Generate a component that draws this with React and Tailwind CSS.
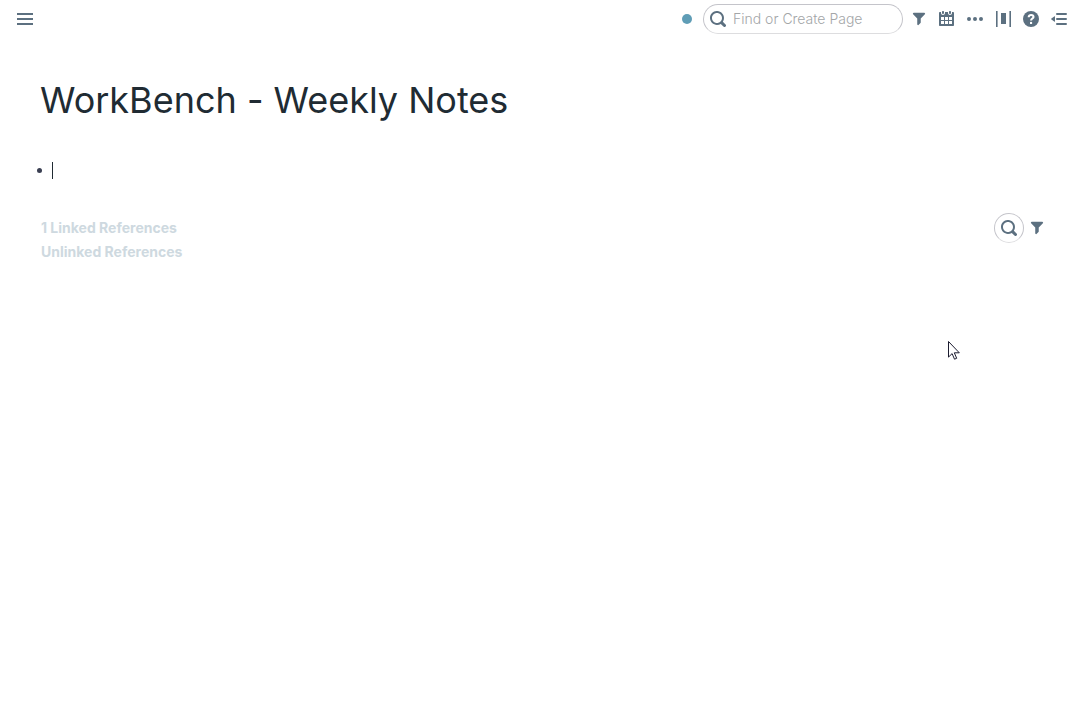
const ICONS = {
  search:
    'M15.55 13.43l-2.67-2.68a6.94 6.94 0 001.11-3.76c0-3.87-3.13-7-7-7s-7 3.13-7 7 3.13 7 7 7c1.39 0 2.68-.42 3.76-1.11l2.68 2.67a1.498 1.498 0 102.12-2.12zm-8.56-1.44c-2.76 0-5-2.24-5-5s2.24-5 5-5 5 2.24 5 5-2.24 5-5 5z',
  filter:
    'M13.99.99h-12a1.003 1.003 0 00-.71 1.71l4.71 4.71V14a1.003 1.003 0 001.71.71l2-2c.18-.18.29-.43.29-.71V7.41L14.7 2.7a1.003 1.003 0 00-.71-1.71z',
  calendar:
    'M11 3c.6 0 1-.5 1-1V1c0-.6-.4-1-1-1s-1 .4-1 1v1c0 .5.4 1 1 1zm3-2h-1v1c0 1.1-.9 2-2 2s-2-.9-2-2V1H6v1c0 1.1-.9 2-2 2s-2-.9-2-2V1H1c-.6 0-1 .5-1 1v12c0 .6.4 1 1 1h13c.6 0 1-.4 1-1V2c0-.6-.5-1-1-1zM5 13H2v-3h3v3zm0-4H2V6h3v3zm4 4H6v-3h3v3zm0-4H6V6h3v3zm4 4h-3v-3h3v3zm0-4h-3V6h3v3zM4 3c.6 0 1-.5 1-1V1c0-.6-.4-1-1-1S3 .4 3 1v1c0 .5.4 1 1 1z',
  more: 'M2 6.03a2 2 0 100 4 2 2 0 100-4zM14 6.03a2 2 0 100 4 2 2 0 100-4zM8 6.03a2 2 0 100 4 2 2 0 100-4z',
  columns: 'M1 0h1.6v16H1zM6 2h5v11H6zM14.4 0H16v16h-1.6z',
  menu: 'M0 2h16v2H0zM0 7h16v2H0zM0 12h16v2H0z',
  menuClosed:
    'M6 2h9a1 1 0 010 2H6a1 1 0 010-2zM6 7h9a1 1 0 010 2H6a1 1 0 010-2zM6 12h9a1 1 0 010 2H6a1 1 0 010-2zM4 5.8v4.4a.5.5 0 01-.8.4L.4 8.4a.5.5 0 010-.8l2.8-2.2a.5.5 0 01.8.4z',
};

function Icon({ name, className = 'size-4' }) {
  return (
    <svg viewBox="0 0 16 16" className={className} fill="currentColor" fillRule="evenodd" aria-hidden="true">
      <path d={ICONS[name]} />
    </svg>
  );
}

function HelpIcon() {
  return (
    <svg viewBox="0 0 16 16" className="size-4" aria-hidden="true">
      <circle cx="8" cy="8" r="8" fill="currentColor" />
      <path d="M5.7 6.2C5.7 4.7 6.8 4 8.1 4s2.4.7 2.4 1.9c0 1.6-2.4 1.7-2.4 3.6" fill="none" stroke="white" strokeWidth="2.1" />
      <path d="M7 10.9h2.1V13H7z" fill="white" />
    </svg>
  );
}

function IconButton({ label, children }) {
  return (
    <button type="button" aria-label={label} className="flex size-4 items-center justify-center">
      {children}
    </button>
  );
}

export default function App() {
  return (
    <div className="min-h-screen bg-white font-['Inter',sans-serif] text-[#202b33] [font-feature-settings:'calt'_0]">
      <header className="flex items-center justify-between py-1 pr-[13px] pl-[17px] text-[#5c7080]">
        <IconButton label="Open menu">
          <Icon name="menu" />
        </IconButton>
        <div className="flex items-center gap-3">
          <div className="flex items-center gap-2">
            <span className="mr-[3px] size-[10px] rounded-full bg-[#5f9db6]" />
            <label className="flex h-[30px] w-[200px] items-center gap-[7px] rounded-full border border-[#c4c4ca] border-b-[#dddddf] pl-[6px]">
              <Icon name="search" className="size-4 shrink-0" />
              <input
                type="text"
                aria-label="Find or Create Page"
                placeholder="Find or Create Page"
                className="w-full min-w-0 bg-transparent text-sm font-light outline-none placeholder:text-[#a3a6a8]"
              />
            </label>
            <IconButton label="Filter">
              <Icon name="filter" className="size-[14px]" />
            </IconButton>
          </div>
          <IconButton label="Daily notes">
            <Icon name="calendar" />
          </IconButton>
          <IconButton label="More">
            <Icon name="more" />
          </IconButton>
          <IconButton label="Page width">
            <Icon name="columns" />
          </IconButton>
          <IconButton label="Help">
            <HelpIcon />
          </IconButton>
          <IconButton label="Open right sidebar">
            <Icon name="menuClosed" />
          </IconButton>
        </div>
      </header>

      <main className="px-10 pt-9">
        <h1 className="text-4xl leading-[52px]">WorkBench - Weekly Notes</h1>

        <ul className="-ml-[3px] pt-8">
          <li className="flex h-6 items-center gap-[10px]">
            <span className="size-[5px] rounded-full bg-[#3a3f52]" />
            <span className="h-[17px] w-px bg-[#202b33]" />
          </li>
        </ul>

        <section className="-mr-[5px] flex items-start justify-between pt-[31px] pl-px">
          <div className="flex flex-col items-start pt-[3px] text-sm leading-6 font-bold text-[#ced9e0]">
            <button type="button">1 Linked References</button>
            <button type="button">Unlinked References</button>
          </div>
          <div className="flex items-center gap-[5px] text-[#5c7080]">
            <button
              type="button"
              aria-label="Search references"
              className="flex size-[30px] items-center justify-center rounded-full border border-[#c4c4ca] border-b-[#dddddf]"
            >
              <Icon name="search" />
            </button>
            <IconButton label="Filter references">
              <Icon name="filter" className="size-[14px]" />
            </IconButton>
          </div>
        </section>
      </main>

      <svg viewBox="0 0 12 20" className="pointer-events-none absolute top-[341px] left-[948px] h-5 w-3" aria-hidden="true">
        <path
          d="M.5.5v15.6l3.6-3.5 2.4 5.6 2.2-.9-2.4-5.5h5z"
          fill="white"
          stroke="#1c1c30"
          strokeLinejoin="round"
        />
      </svg>
    </div>
  );
}
